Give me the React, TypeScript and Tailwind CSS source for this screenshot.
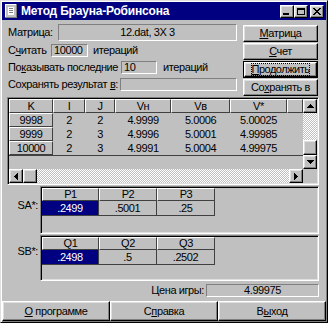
import React from "react";

const raised =
  "border border-t-white border-l-white border-r-black border-b-black shadow-[inset_-1px_-1px_0_#808080,inset_1px_1px_0_#dfdfdf]";
const fixedCell =
  "border border-t-white border-l-white border-r-[#404040] border-b-[#404040] flex items-center justify-center";
const sunken1 = "border border-t-[#808080] border-l-[#808080] border-r-white border-b-white";
const sunken2 =
  "border border-t-[#808080] border-l-[#808080] border-r-white border-b-white p-[1px] shadow-[inset_1px_1px_0_#000,inset_-1px_-1px_0_#dfdfdf]";
const dither =
  "bg-[image:repeating-conic-gradient(#c0c0c0_0%_25%,#ffffff_0%_50%)] bg-[length:2px_2px]";

function Tri({ dir }: { dir: "up" | "down" | "left" | "right" }) {
  if (dir === "up" || dir === "down") {
    const rows = dir === "up" ? [0, 1, 2, 3] : [3, 2, 1, 0];
    return (
      <svg width="7" height="4" viewBox="0 0 7 4" shapeRendering="crispEdges">
        {rows.map((r, i) => (
          <rect key={i} x={3 - r} y={i} width={2 * r + 1} height={1} fill="#000" />
        ))}
      </svg>
    );
  }
  const cols = dir === "left" ? [0, 1, 2, 3] : [3, 2, 1, 0];
  return (
    <svg width="4" height="7" viewBox="0 0 4 7" shapeRendering="crispEdges">
      {cols.map((c, i) => (
        <rect key={i} x={i} y={3 - c} width={1} height={2 * c + 1} fill="#000" />
      ))}
    </svg>
  );
}

function ScrollBtn({ dir }: { dir: "up" | "down" | "left" | "right" }) {
  return (
    <div className={`w-[14px] h-[14px] shrink-0 bg-[#c0c0c0] flex items-center justify-center ${raised}`}>
      <Tri dir={dir} />
    </div>
  );
}

function SideBtn({ children, focused }: { children: React.ReactNode; focused?: boolean }) {
  if (focused) {
    return (
      <div className="h-[17px] w-[75px] border border-black">
        <div className={`h-full w-full flex items-center justify-center ${raised}`}>
          <span className="border border-dotted border-black leading-[11px] whitespace-nowrap tracking-[-0.5px]">{children}</span>
        </div>
      </div>
    );
  }
  return (
    <div className={`h-[17px] w-[75px] flex items-center justify-center ${raised}`}>
      <span className="whitespace-nowrap">{children}</span>
    </div>
  );
}

const cols = [
  { w: "w-[44px]", label: "K" },
  { w: "w-[32px]", label: "I" },
  { w: "w-[30px]", label: "J" },
  { w: "w-[56px]", label: "Vн" },
  { w: "w-[59px]", label: "Vв" },
  { w: "w-[57px]", label: "V*" },
  { w: "w-[16px]", label: "" },
];

const rows = [
  ["9998", "2", "2", "4.9999", "5.0006", "5.00025"],
  ["9999", "2", "3", "4.9996", "5.0001", "4.99985"],
  ["10000", "2", "3", "4.9991", "5.0004", "4.99975"],
];

const smallCols = ["w-[57px]", "w-[58px]", "w-[58px]"];

function SmallGrid({ heads, vals }: { heads: string[]; vals: string[] }) {
  return (
    <div className={`flex-1 h-full ${sunken2} bg-[#c0c0c0]`}>
      <div className="flex">
        {heads.map((h, i) => (
          <div key={i} className={`${smallCols[i]} h-[13px] ${fixedCell}`}>
            {h}
          </div>
        ))}
      </div>
      <div className="flex">
        {vals.map((v, i) => (
          <div
            key={i}
            className={`${smallCols[i]} h-[15px] flex items-center justify-center border-r border-b border-[#404040] ${
              i === 0 ? "bg-[#000080] text-white" : ""
            }`}
          >
            {v}
          </div>
        ))}
      </div>
    </div>
  );
}

export default function App() {
  return (
    <div
      className="w-[328px] h-[323px] bg-[#c0c0c0] text-black font-['Liberation_Sans',Arial,sans-serif] text-[11px] leading-[13px] tracking-[-0.4px] whitespace-nowrap border border-t-[#dfdfdf] border-l-[#dfdfdf] border-r-black border-b-black p-[1px] shadow-[inset_1px_1px_0_#fff,inset_-1px_-1px_0_#808080] flex flex-col overflow-hidden"
    >
      {/* Title bar */}
      <div className="h-[18px] bg-[#000080] flex items-center pl-[2px] pr-[2px] shrink-0">
        <svg width="14" height="14" viewBox="0 0 14 14" shapeRendering="crispEdges">
          <rect x="1" y="0" width="12" height="14" fill="#c0c0c0" />
          <rect x="1" y="0" width="12" height="1" fill="#fff" />
          <rect x="1" y="0" width="1" height="14" fill="#fff" />
          <rect x="12" y="0" width="1" height="14" fill="#808080" />
          <rect x="1" y="13" width="12" height="1" fill="#808080" />
          <rect x="4" y="3" width="6" height="8" fill="#fff" />
          <rect x="5" y="4" width="4" height="1" fill="#808080" />
          <rect x="5" y="6" width="4" height="1" fill="#808080" />
          <rect x="5" y="8" width="4" height="1" fill="#808080" />
        </svg>
        <span className="ml-[3px] text-white font-bold text-[12px] leading-[14px] tracking-[-0.2px]">Метод Брауна-Робинсона</span>
        <div className="ml-auto flex items-center">
          <div className={`w-[14px] h-[13px] bg-[#c0c0c0] flex items-end justify-center pb-[2px] ${raised}`}>
            <div className="w-[6px] h-[2px] bg-black mr-[2px]" />
          </div>
          <div className={`w-[14px] h-[13px] bg-[#c0c0c0] flex items-center justify-center ${raised}`}>
            <div className="w-[8px] h-[7px] border border-black border-t-2" />
          </div>
          <div className={`ml-[2px] w-[14px] h-[13px] bg-[#c0c0c0] flex items-center justify-center ${raised}`}>
            <svg width="8" height="7" viewBox="0 0 8 7" shapeRendering="crispEdges">
              {[0, 1, 2, 3, 4, 5, 6].map((i) => (
                <React.Fragment key={i}>
                  <rect x={i} y={i} width={2} height={1} fill="#000" />
                  <rect x={6 - i} y={i} width={2} height={1} fill="#000" />
                </React.Fragment>
              ))}
            </svg>
          </div>
        </div>
      </div>

      {/* Top section */}
      <div className="flex items-start mt-[4px] shrink-0">
        <div className="flex flex-col pl-[6px] w-[241px]">
          <div className="flex items-center h-[17px]">
            <span className="w-[50px]">Матрица:</span>
            <div className={`w-[179px] h-[17px] ${sunken1} flex items-center justify-center`}>12.dat, 3Х 3</div>
          </div>
          <div className="flex items-center h-[13px] mt-[3px]">
            <span className="w-[43px]">
              С<u>ч</u>итать
            </span>
            <div className={`w-[37px] h-[13px] ${sunken1} flex items-center pl-[2px]`}>10000</div>
            <span className="ml-[5px]">итераций</span>
          </div>
          <div className="flex items-center h-[13px] mt-[4px]">
            <span className="w-[113px]">
              По<u>к</u>азывать последние
            </span>
            <div className={`w-[36px] h-[13px] ${sunken1} flex items-center pl-[2px]`}>10</div>
            <span className="ml-[6px]">итераций</span>
          </div>
          <div className="flex items-center h-[13px] mt-[4px]">
            <span className="w-[112px]">
              Сохранять результат <u>в</u>:
            </span>
            <div className={`w-[117px] h-[13px] ${sunken1}`} />
          </div>
        </div>
        <div className="flex flex-col gap-[1px] mt-[1px]">
          <SideBtn>
            <u>М</u>атрица
          </SideBtn>
          <SideBtn>
            <u>С</u>чет
          </SideBtn>
          <SideBtn focused>
            <u>П</u>родолжить
          </SideBtn>
          <SideBtn>
            Со<u>х</u>ранять в
          </SideBtn>
        </div>
      </div>

      {/* Main grid */}
      <div className={`ml-[5px] mt-[1px] w-[312px] h-[88px] shrink-0 ${sunken2}`}>
        <div className="flex">
          <div className="w-[294px] flex flex-col">
            <div className="h-[70px] flex flex-col">
              <div className="flex">
                {cols.map((c, i) => (
                  <div key={i} className={`${c.w} h-[14px] ${fixedCell}`}>
                    {c.label}
                  </div>
                ))}
              </div>
              {rows.map((r, ri) => (
                <div key={ri} className="flex">
                  {r.map((v, ci) =>
                    ci === 0 ? (
                      <div key={ci} className={`${cols[ci].w} h-[14px] ${fixedCell}`}>
                        {v}
                      </div>
                    ) : (
                      <div key={ci} className={`${cols[ci].w} h-[14px] flex items-center justify-center`}>
                        {v}
                      </div>
                    )
                  )}
                </div>
              ))}
              <div className="h-[1px] bg-[#404040]" />
            </div>
            <div className="flex h-[14px]">
              <ScrollBtn dir="left" />
              <div className={`w-[14px] h-[14px] ${raised}`} />
              <div className={`flex-1 ${dither}`} />
              <ScrollBtn dir="right" />
            </div>
          </div>
          <div className="w-[14px] flex flex-col">
            <ScrollBtn dir="up" />
            <div className={`h-[27px] ${dither}`} />
            <div className={`h-[15px] ${raised}`} />
            <ScrollBtn dir="down" />
            <div className="h-[14px]" />
          </div>
        </div>
      </div>

      {/* SA */}
      <div className="flex mt-[1px] h-[48px] shrink-0 pr-[7px]">
        <div className="w-[38px] text-right pr-[2px] pt-[13px]">SA*:</div>
        <SmallGrid heads={["P1", "P2", "P3"]} vals={[".2499", ".5001", ".25"]} />
      </div>

      {/* SB */}
      <div className="flex mt-[1px] h-[46px] shrink-0 pr-[7px]">
        <div className="w-[38px] text-right pr-[2px] pt-[10px]">SB*:</div>
        <SmallGrid heads={["Q1", "Q2", "Q3"]} vals={[".2498", ".5", ".2502"]} />
      </div>

      {/* Price */}
      <div className="flex items-center justify-end mt-[3px] h-[13px] pr-[7px] shrink-0">
        <span className="mr-[2px]">Цена игры:</span>
        <div className={`w-[113px] h-[13px] ${sunken1} flex items-center justify-center`}>4.99975</div>
      </div>

      {/* Bottom buttons */}
      <div className="mt-auto flex h-[20px] shrink-0">
        <div className={`flex-1 flex items-center justify-center ${raised}`}>
          <span>
            <u>О</u> программе
          </span>
        </div>
        <div className={`flex-1 flex items-center justify-center ${raised}`}>
          <span>
            С<u>п</u>равка
          </span>
        </div>
        <div className={`flex-1 flex items-center justify-center ${raised}`}>
          <span>
            В<u>ы</u>ход
          </span>
        </div>
      </div>
    </div>
  );
}
